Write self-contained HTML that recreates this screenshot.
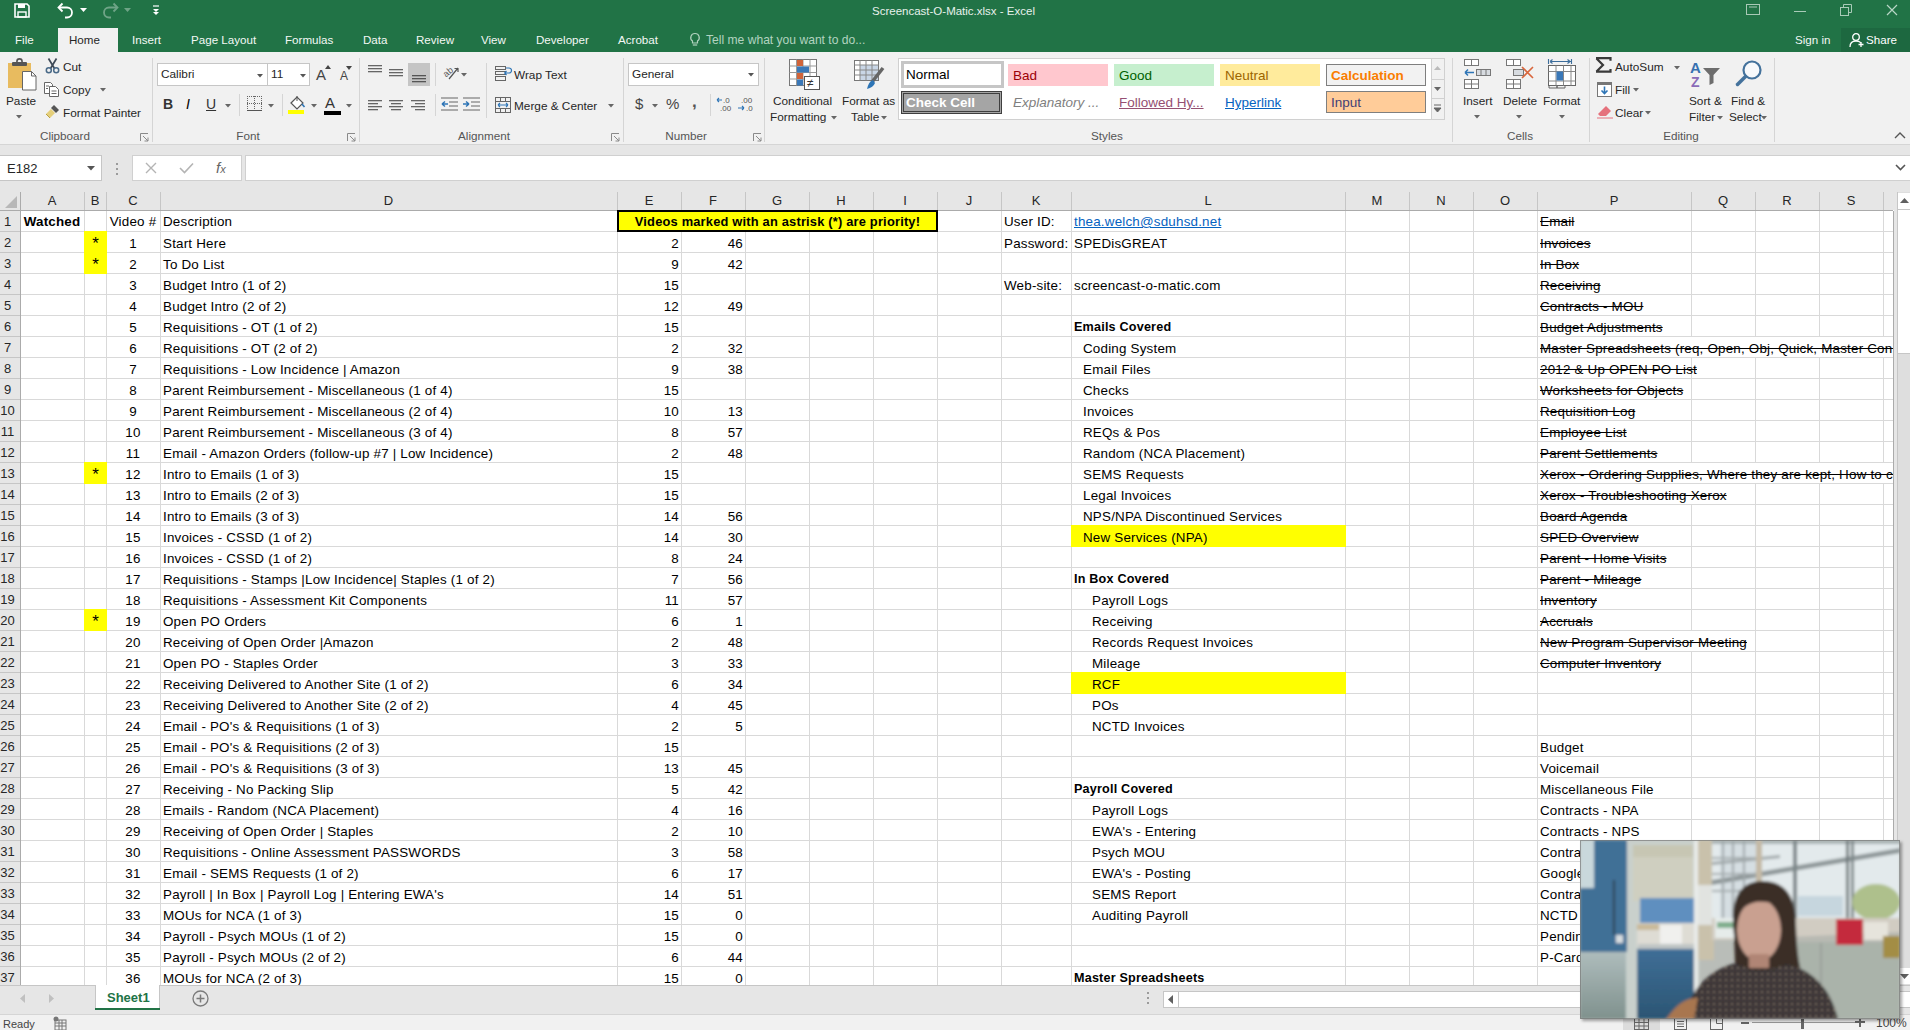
<!DOCTYPE html><html><head><meta charset="utf-8"><style>
html,body{margin:0;padding:0;width:1910px;height:1030px;overflow:hidden;background:#fff;font-family:"Liberation Sans", sans-serif;}
.t{position:absolute;white-space:nowrap;line-height:1;}
.c{position:absolute;white-space:nowrap;font-size:13.4px;letter-spacing:0.2px;line-height:21px;height:21px;color:#000;padding-top:1px}
.r{text-align:right}
.ce{text-align:center}
.rib{color:#262626;font-size:13px}
svg{position:absolute;overflow:visible}

</style></head><body>
<div style="position:absolute;left:0px;top:0px;width:1910px;height:52px;background:#217346"></div>
<div class="t" style="left:872px;top:6px;font-size:11.5px;color:#e8f1ec;">Screencast-O-Matic.xlsx - Excel</div>
<div style="position:absolute;left:58px;top:28px;width:60px;height:25px;background:#f1f1f1"></div>
<div class="t" style="left:15px;top:34px;font-size:11.6px;color:#f3f8f5;">File</div>
<div class="t" style="left:69px;top:34px;font-size:11.6px;color:#262626;">Home</div>
<div class="t" style="left:132px;top:34px;font-size:11.6px;color:#f3f8f5;">Insert</div>
<div class="t" style="left:191px;top:34px;font-size:11.6px;color:#f3f8f5;">Page Layout</div>
<div class="t" style="left:285px;top:34px;font-size:11.6px;color:#f3f8f5;">Formulas</div>
<div class="t" style="left:363px;top:34px;font-size:11.6px;color:#f3f8f5;">Data</div>
<div class="t" style="left:416px;top:34px;font-size:11.6px;color:#f3f8f5;">Review</div>
<div class="t" style="left:481px;top:34px;font-size:11.6px;color:#f3f8f5;">View</div>
<div class="t" style="left:536px;top:34px;font-size:11.6px;color:#f3f8f5;">Developer</div>
<div class="t" style="left:618px;top:34px;font-size:11.6px;color:#f3f8f5;">Acrobat</div>
<div class="t" style="left:706px;top:34px;font-size:12.1px;color:#b3d3c0;">Tell me what you want to do...</div>
<svg style="left:689px;top:32px" width="12" height="16"><path d="M6 1.5a4.2 4.2 0 0 0-2.5 7.6V11h5V9.1A4.2 4.2 0 0 0 6 1.5z" fill="none" stroke="#b3d3c0" stroke-width="1.2"/><path d="M3.8 13h4.4" stroke="#b3d3c0" stroke-width="1.2"/></svg>
<div class="t" style="left:1795px;top:34px;font-size:11.6px;color:#f3f8f5;">Sign in</div>
<div style="position:absolute;left:1841px;top:28px;width:69px;height:24px;background:#1d6840"></div>
<svg style="left:1849px;top:32px" width="16" height="16"><circle cx="7" cy="5" r="3.3" fill="none" stroke="#fff" stroke-width="1.3"/><path d="M1 15c0-4 2.5-6 6-6s4 1 5 2" fill="none" stroke="#fff" stroke-width="1.3"/><path d="M12 10v5M9.5 12.5h5" stroke="#fff" stroke-width="1.3"/></svg>
<div class="t" style="left:1866px;top:34px;font-size:11.6px;color:#fff;">Share</div>
<svg style="left:14px;top:3px" width="16" height="15"><path d="M1 1h12l2 2v11H1z" fill="none" stroke="#fff" stroke-width="1.6"/><rect x="4" y="1" width="7" height="4" fill="#fff"/><rect x="4" y="9" width="8" height="5" fill="none" stroke="#fff" stroke-width="1.4"/></svg>
<svg style="left:57px;top:2px" width="18" height="16"><path d="M2 5.5h8a5 5 0 0 1 0 10H8" fill="none" stroke="#fff" stroke-width="1.8"/><path d="M5.5 1.5L1.5 5.5 5.5 9.5" fill="none" stroke="#fff" stroke-width="1.8"/></svg>
<svg style="left:80px;top:8px" width="7" height="4"><path d="M0 0h7L3.5 4z" fill="#fff"/></svg>
<svg style="left:101px;top:2px" width="18" height="16" opacity="0.35"><path d="M16 5.5H8a5 5 0 0 0 0 10h2" fill="none" stroke="#fff" stroke-width="1.8"/><path d="M12.5 1.5l4 4-4 4" fill="none" stroke="#fff" stroke-width="1.8"/></svg>
<svg style="left:124px;top:8px" width="7" height="4" opacity="0.35"><path d="M0 0h7L3.5 4z" fill="#fff"/></svg>
<svg style="left:152px;top:5px" width="8" height="10"><path d="M1 1h6" stroke="#fff" stroke-width="1.2"/><path d="M1 4h6L4 7z" fill="#fff"/><path d="M1 7h6L4 10z" fill="#fff"/></svg>
<svg style="left:1746px;top:4px" width="14" height="11"><rect x="0.5" y="0.5" width="13" height="10" fill="none" stroke="#a9c9b6" stroke-width="1"/><path d="M3 3h8" stroke="#a9c9b6"/></svg>
<div style="position:absolute;left:1794px;top:11px;width:12px;height:1px;background:#a9cbb8"></div>
<svg style="left:1840px;top:4px" width="12" height="12"><rect x="0.5" y="3.5" width="8" height="8" fill="none" stroke="#a9cbb8"/><path d="M3.5 3.5v-3h8v8h-3" fill="none" stroke="#a9cbb8"/></svg>
<svg style="left:1886px;top:4px" width="12" height="12"><path d="M1 1l10 10M11 1L1 11" stroke="#b9d6c6" stroke-width="1.2"/></svg>
<div style="position:absolute;left:0px;top:52px;width:1910px;height:93px;background:#f1f1f1"></div>
<div style="position:absolute;left:0px;top:144px;width:1910px;height:1px;background:#d5d5d5"></div>
<svg style="left:7px;top:58px" width="31" height="33">
<rect x="1" y="5" width="23" height="25" fill="#e8bb5f"/>
<rect x="5" y="4" width="15" height="4" rx="1" fill="#555"/>
<circle cx="12.5" cy="3.5" r="2.6" fill="none" stroke="#555" stroke-width="1.6"/>
<path d="M15.5 13.5h9l4.5 4.5v14h-13.5z" fill="#fff" stroke="#666" stroke-width="1"/>
<path d="M24.5 13.5v4.5h4.5" fill="none" stroke="#666"/>
</svg>
<div class="t" style="left:6px;top:96px;font-size:11.8px;color:#262626;">Paste</div>
<svg style="left:16px;top:115px" width="6" height="4"><path d="M0 0h6L3 3.5z" fill="#666"/></svg>
<svg style="left:45px;top:58px" width="15" height="16">
<path d="M3.5 0.5l6 10M11.5 0.5l-6 10" stroke="#3e4a57" stroke-width="1.7"/>
<circle cx="3.8" cy="12.3" r="2.5" fill="none" stroke="#4a6a88" stroke-width="1.5"/>
<circle cx="11.2" cy="12.3" r="2.5" fill="none" stroke="#4a6a88" stroke-width="1.5"/>
</svg>
<div class="t" style="left:63px;top:62px;font-size:11.8px;color:#262626;">Cut</div>
<svg style="left:44px;top:82px" width="16" height="15">
<path d="M0.5 0.5h6l2 2v9h-8z" fill="#fff" stroke="#666"/>
<path d="M5.5 4.5h6l3 3v7h-9z" fill="#fff" stroke="#666"/>
<path d="M2 4h3M2 6.5h2M7.5 9h5M7.5 11.5h5" stroke="#666"/>
</svg>
<div class="t" style="left:63px;top:85px;font-size:11.8px;color:#262626;">Copy</div>
<svg style="left:100px;top:88px" width="6" height="4"><path d="M0 0h6L3 3.5z" fill="#666"/></svg>
<svg style="left:45px;top:104px" width="15" height="15">
<path d="M9 1l5 5-3 3-5-5z" fill="#555"/>
<path d="M6 5l4 4-5 5-4-4z" fill="#e5cf7a"/>
<path d="M1 10l4 4" stroke="#b9a040" stroke-width="1"/>
</svg>
<div class="t" style="left:63px;top:108px;font-size:11.8px;color:#262626;">Format Painter</div>
<div class="t" style="left:5px;width:120px;text-align:center;top:130px;font-size:11.7px;color:#555">Clipboard</div>
<svg style="left:140px;top:133px" width="9" height="9"><path d="M0.5 8V0.5H8" fill="none" stroke="#8a8a8a"/><path d="M3 3l5 5M8 4.5V8H4.5" fill="none" stroke="#8a8a8a"/></svg>
<div style="position:absolute;left:152px;top:58px;width:1px;height:84px;background:#d5d5d5"></div>
<div style="position:absolute;left:157px;top:63px;width:111px;height:23px;background:#fff;box-sizing:border-box;border:1px solid #c6c6c6"></div>
<div class="t" style="left:161px;top:69px;font-size:11.8px;color:#262626;">Calibri</div>
<svg style="left:257px;top:74px" width="6" height="4"><path d="M0 0h6L3 3.5z" fill="#555"/></svg>
<div style="position:absolute;left:267px;top:63px;width:43px;height:23px;background:#fff;box-sizing:border-box;border:1px solid #c6c6c6"></div>
<div class="t" style="left:271px;top:69px;font-size:11.8px;color:#262626;">11</div>
<svg style="left:300px;top:74px" width="6" height="4"><path d="M0 0h6L3 3.5z" fill="#555"/></svg>
<div class="t" style="left:316px;top:67px;font-size:15px;color:#444">A</div>
<svg style="left:325px;top:65px" width="6" height="4"><path d="M0 4L3 0 6 4z" fill="#444"/></svg>
<div class="t" style="left:340px;top:70px;font-size:12px;color:#444">A</div>
<svg style="left:346px;top:66px" width="6" height="4"><path d="M0 0h6L3 4z" fill="#444"/></svg>
<div class="t" style="left:163px;top:97px;font-size:14px;font-weight:bold;color:#333">B</div>
<div class="t" style="left:186px;top:97px;font-size:14px;font-style:italic;font-family:"Liberation Serif",serif;font-weight:bold;color:#333">I</div>
<div class="t" style="left:206px;top:97px;font-size:14px;text-decoration:underline;color:#333">U</div>
<svg style="left:225px;top:104px" width="6" height="4"><path d="M0 0h6L3 3.5z" fill="#666"/></svg>
<div style="position:absolute;left:239px;top:94px;width:1px;height:22px;background:#d5d5d5"></div>
<svg style="left:247px;top:96px" width="15" height="15">
<rect x="0" y="0" width="1" height="1" fill="#666"/><rect x="0" y="0" width="1" height="1" fill="#666"/><rect x="0" y="7" width="1" height="1" fill="#666"/><rect x="7" y="0" width="1" height="1" fill="#666"/><rect x="14" y="0" width="1" height="1" fill="#666"/><rect x="2" y="0" width="1" height="1" fill="#666"/><rect x="0" y="2" width="1" height="1" fill="#666"/><rect x="2" y="7" width="1" height="1" fill="#666"/><rect x="7" y="2" width="1" height="1" fill="#666"/><rect x="14" y="2" width="1" height="1" fill="#666"/><rect x="4" y="0" width="1" height="1" fill="#666"/><rect x="0" y="4" width="1" height="1" fill="#666"/><rect x="4" y="7" width="1" height="1" fill="#666"/><rect x="7" y="4" width="1" height="1" fill="#666"/><rect x="14" y="4" width="1" height="1" fill="#666"/><rect x="6" y="0" width="1" height="1" fill="#666"/><rect x="0" y="6" width="1" height="1" fill="#666"/><rect x="6" y="7" width="1" height="1" fill="#666"/><rect x="7" y="6" width="1" height="1" fill="#666"/><rect x="14" y="6" width="1" height="1" fill="#666"/><rect x="8" y="0" width="1" height="1" fill="#666"/><rect x="0" y="8" width="1" height="1" fill="#666"/><rect x="8" y="7" width="1" height="1" fill="#666"/><rect x="7" y="8" width="1" height="1" fill="#666"/><rect x="14" y="8" width="1" height="1" fill="#666"/><rect x="10" y="0" width="1" height="1" fill="#666"/><rect x="0" y="10" width="1" height="1" fill="#666"/><rect x="10" y="7" width="1" height="1" fill="#666"/><rect x="7" y="10" width="1" height="1" fill="#666"/><rect x="14" y="10" width="1" height="1" fill="#666"/><rect x="12" y="0" width="1" height="1" fill="#666"/><rect x="0" y="12" width="1" height="1" fill="#666"/><rect x="12" y="7" width="1" height="1" fill="#666"/><rect x="7" y="12" width="1" height="1" fill="#666"/><rect x="14" y="12" width="1" height="1" fill="#666"/><rect x="14" y="0" width="1" height="1" fill="#666"/><rect x="0" y="14" width="1" height="1" fill="#666"/><rect x="14" y="7" width="1" height="1" fill="#666"/><rect x="7" y="14" width="1" height="1" fill="#666"/><rect x="14" y="14" width="1" height="1" fill="#666"/><rect x="0" y="14" width="15" height="1" fill="#555"/>
</svg>
<svg style="left:268px;top:104px" width="6" height="4"><path d="M0 0h6L3 3.5z" fill="#666"/></svg>
<div style="position:absolute;left:282px;top:94px;width:1px;height:22px;background:#d5d5d5"></div>
<svg style="left:288px;top:95px" width="20" height="20">
<path d="M3 8l6-6 6 6-6 6z" fill="#fff" stroke="#555" stroke-width="1.2"/>
<path d="M9 1V6" stroke="#555"/>
<path d="M14 9l2.5 3" stroke="#2e75b6" stroke-width="1.6"/>
<rect x="0" y="15" width="16" height="4" fill="#ffff00"/>
</svg>
<svg style="left:311px;top:104px" width="6" height="4"><path d="M0 0h6L3 3.5z" fill="#666"/></svg>
<div class="t" style="left:325px;top:95px;font-size:15px;color:#333">A</div>
<div style="position:absolute;left:324px;top:111px;width:17px;height:4px;background:#000"></div>
<svg style="left:346px;top:104px" width="6" height="4"><path d="M0 0h6L3 3.5z" fill="#666"/></svg>
<div class="t" style="left:188px;width:120px;text-align:center;top:130px;font-size:11.7px;color:#555">Font</div>
<svg style="left:347px;top:133px" width="9" height="9"><path d="M0.5 8V0.5H8" fill="none" stroke="#8a8a8a"/><path d="M3 3l5 5M8 4.5V8H4.5" fill="none" stroke="#8a8a8a"/></svg>
<div style="position:absolute;left:359px;top:58px;width:1px;height:84px;background:#d5d5d5"></div>
<svg style="left:368px;top:65px" width="16" height="14"><rect x="0" y="0" width="14" height="1.3" fill="#666"/><rect x="0" y="3" width="14" height="1.3" fill="#666"/><rect x="0" y="6" width="14" height="1.3" fill="#666"/></svg>
<svg style="left:389px;top:69px" width="16" height="14"><rect x="0" y="0" width="14" height="1.3" fill="#666"/><rect x="0" y="3" width="14" height="1.3" fill="#666"/><rect x="0" y="6" width="14" height="1.3" fill="#666"/></svg>
<div style="position:absolute;left:408px;top:63px;width:22px;height:23px;background:#c5c5c5"></div>
<svg style="left:412px;top:75px" width="16" height="14"><rect x="0" y="0" width="14" height="1.3" fill="#555"/><rect x="0" y="3" width="14" height="1.3" fill="#555"/><rect x="0" y="6" width="14" height="1.3" fill="#555"/></svg>
<div style="position:absolute;left:435px;top:63px;width:1px;height:23px;background:#d5d5d5"></div>
<svg style="left:442px;top:64px" width="18" height="17">
<text x="1" y="11" font-size="9" fill="#555" font-family="Liberation Sans" transform="rotate(-40 6 8)">ab</text>
<path d="M7 15L16 4M12.5 4.5H16V8" fill="none" stroke="#555" stroke-width="1.2"/>
</svg>
<svg style="left:461px;top:73px" width="6" height="4"><path d="M0 0h6L3 3.5z" fill="#666"/></svg>
<svg style="left:368px;top:100px" width="16" height="14"><rect x="0" y="0" width="14" height="1.3" fill="#666"/><rect x="0" y="3" width="10" height="1.3" fill="#666"/><rect x="0" y="6" width="14" height="1.3" fill="#666"/><rect x="0" y="9" width="10" height="1.3" fill="#666"/></svg>
<svg style="left:389px;top:100px" width="16" height="14"><rect x="0" y="0" width="14" height="1.3" fill="#666"/><rect x="2" y="3" width="10" height="1.3" fill="#666"/><rect x="0" y="6" width="14" height="1.3" fill="#666"/><rect x="2" y="9" width="10" height="1.3" fill="#666"/></svg>
<svg style="left:411px;top:100px" width="16" height="14"><rect x="0" y="0" width="14" height="1.3" fill="#666"/><rect x="4" y="3" width="10" height="1.3" fill="#666"/><rect x="0" y="6" width="14" height="1.3" fill="#666"/><rect x="4" y="9" width="10" height="1.3" fill="#666"/></svg>
<div style="position:absolute;left:435px;top:94px;width:1px;height:22px;background:#d5d5d5"></div>
<svg style="left:441px;top:97px" width="18" height="14">
<path d="M0 1h17M8 5h9M8 9h9M0 13h17" stroke="#666" stroke-width="1.2"/>
<path d="M1 7h6M1 7l3-2.5M1 7l3 2.5" stroke="#2e75b6" stroke-width="1.5"/>
</svg>
<svg style="left:463px;top:97px" width="18" height="14">
<path d="M0 1h17M8 5h9M8 9h9M0 13h17" stroke="#666" stroke-width="1.2"/>
<path d="M0 7h6M6 7l-3-2.5M6 7l-3 2.5" stroke="#2e75b6" stroke-width="1.5"/>
</svg>
<div style="position:absolute;left:486px;top:63px;width:1px;height:55px;background:#d5d5d5"></div>
<svg style="left:495px;top:66px" width="17" height="16">
<rect x="0.5" y="0.5" width="10" height="3" fill="none" stroke="#666"/>
<rect x="0.5" y="5.5" width="10" height="3" fill="none" stroke="#666"/>
<rect x="0.5" y="10.5" width="10" height="4" fill="none" stroke="#666"/>
<path d="M11 2h3a2.5 2.5 0 0 1 0 5h-4M11.5 5l-1.8 2 1.8 2" fill="none" stroke="#2e75b6" stroke-width="1.2"/>
</svg>
<div class="t" style="left:514px;top:70px;font-size:11.8px;color:#262626;">Wrap Text</div>
<svg style="left:495px;top:97px" width="16" height="16">
<rect x="0.5" y="0.5" width="15" height="15" fill="none" stroke="#666"/>
<path d="M0.5 4.5h15M0.5 11.5h15M5.5 0.5v4M10.5 0.5v4M5.5 11.5v4M10.5 11.5v4" stroke="#666"/>
<path d="M3 8h10M3 8l2-2M3 8l2 2M13 8l-2-2M13 8l-2 2" stroke="#2e75b6" stroke-width="1.1"/>
</svg>
<div class="t" style="left:514px;top:101px;font-size:11.8px;color:#262626;">Merge &amp; Center</div>
<svg style="left:608px;top:104px" width="6" height="4"><path d="M0 0h6L3 3.5z" fill="#666"/></svg>
<div class="t" style="left:424px;width:120px;text-align:center;top:130px;font-size:11.7px;color:#555">Alignment</div>
<svg style="left:611px;top:133px" width="9" height="9"><path d="M0.5 8V0.5H8" fill="none" stroke="#8a8a8a"/><path d="M3 3l5 5M8 4.5V8H4.5" fill="none" stroke="#8a8a8a"/></svg>
<div style="position:absolute;left:623px;top:58px;width:1px;height:84px;background:#d5d5d5"></div>
<div style="position:absolute;left:628px;top:63px;width:131px;height:23px;background:#fff;box-sizing:border-box;border:1px solid #c6c6c6"></div>
<div class="t" style="left:632px;top:69px;font-size:11.8px;color:#262626;">General</div>
<svg style="left:748px;top:73px" width="6" height="4"><path d="M0 0h6L3 3.5z" fill="#555"/></svg>
<div class="t" style="left:635px;top:96px;font-size:15px;color:#444">$</div>
<svg style="left:652px;top:104px" width="6" height="4"><path d="M0 0h6L3 3.5z" fill="#666"/></svg>
<div class="t" style="left:666px;top:96px;font-size:15px;color:#444">%</div>
<div class="t" style="left:692px;top:93px;font-size:17px;font-weight:bold;color:#555">,</div>
<div style="position:absolute;left:710px;top:94px;width:1px;height:22px;background:#d5d5d5"></div>
<svg style="left:717px;top:96px" width="17" height="16">
<text x="6" y="7" font-size="8" fill="#555" font-family="Liberation Sans">.0</text>
<text x="3" y="15" font-size="8" fill="#555" font-family="Liberation Sans">.00</text>
<path d="M0 4h5M0 4l2-2M0 4l2 2" stroke="#2e75b6" stroke-width="1.1"/>
</svg>
<svg style="left:738px;top:96px" width="17" height="16">
<text x="3" y="7" font-size="8" fill="#555" font-family="Liberation Sans">.00</text>
<text x="8" y="15" font-size="8" fill="#555" font-family="Liberation Sans">.0</text>
<path d="M0 12h6M6 12l-2-2M6 12l-2 2" stroke="#2e75b6" stroke-width="1.1"/>
</svg>
<div class="t" style="left:626px;width:120px;text-align:center;top:130px;font-size:11.7px;color:#555">Number</div>
<svg style="left:753px;top:133px" width="9" height="9"><path d="M0.5 8V0.5H8" fill="none" stroke="#8a8a8a"/><path d="M3 3l5 5M8 4.5V8H4.5" fill="none" stroke="#8a8a8a"/></svg>
<div style="position:absolute;left:764px;top:58px;width:1px;height:84px;background:#d5d5d5"></div>
<svg style="left:789px;top:59px" width="32" height="32">
<rect x="0.5" y="0.5" width="27" height="26" fill="#fff" stroke="#777"/>
<path d="M0.5 7h27M0.5 13.5h27M0.5 20h27M7.5 0.5v26M14 0.5v26M21 0.5v26" stroke="#999"/>
<rect x="8" y="1" width="6" height="6" fill="#d0643a"/>
<rect x="8" y="7.5" width="12" height="6" fill="#3a78b8"/>
<rect x="8" y="14" width="6" height="6" fill="#d0643a"/>
<rect x="8" y="20.5" width="6" height="6" fill="#3a78b8"/>
<rect x="15.5" y="17.5" width="15" height="13" fill="#fff" stroke="#555"/>
<text x="18" y="28" font-size="12" fill="#333" font-family="Liberation Sans">≠</text>
</svg>
<div class="t" style="left:773px;top:96px;font-size:11.8px;color:#262626;">Conditional</div>
<div class="t" style="left:770px;top:112px;font-size:11.8px;color:#262626;">Formatting</div>
<svg style="left:831px;top:116px" width="6" height="4"><path d="M0 0h6L3 3.5z" fill="#666"/></svg>
<svg style="left:854px;top:60px" width="31" height="31">
<rect x="0.5" y="0.5" width="24" height="20" fill="#fff" stroke="#777"/>
<rect x="6" y="5" width="18" height="15" fill="#c9d6e6"/>
<path d="M0.5 5h24M0.5 10h24M0.5 15h24M6 0.5v20M12 0.5v20M18 0.5v20" stroke="#888"/>
<path d="M29 8L18 22" stroke="#666" stroke-width="3.5"/>
<path d="M19 20c-3 1-5 4-6 9 4-1 7-3 8-6z" fill="#2e75b6"/>
</svg>
<div class="t" style="left:842px;top:96px;font-size:11.8px;color:#262626;">Format as</div>
<div class="t" style="left:851px;top:112px;font-size:11.8px;color:#262626;">Table</div>
<svg style="left:881px;top:116px" width="6" height="4"><path d="M0 0h6L3 3.5z" fill="#666"/></svg>
<div style="position:absolute;left:898px;top:58px;width:547px;height:62px;background:#fff;box-sizing:border-box;border:1px solid #d0d0d0"></div>
<div style="position:absolute;left:901px;top:61px;width:103px;height:27px;background:#fff;box-sizing:border-box;border:3px solid #c6c6c6"></div>
<div class="t" style="left:906px;top:66px;font-size:13.5px;color:#000;padding-top:2px">Normal</div>
<div style="position:absolute;left:1008px;top:64px;width:100px;height:22px;background:#ffc7ce;box-sizing:border-box;"></div>
<div class="t" style="left:1013px;top:69px;font-size:13.5px;color:#9c0006;">Bad</div>
<div style="position:absolute;left:1114px;top:64px;width:100px;height:22px;background:#c6efce;box-sizing:border-box;"></div>
<div class="t" style="left:1119px;top:69px;font-size:13.5px;color:#006100;">Good</div>
<div style="position:absolute;left:1220px;top:64px;width:100px;height:22px;background:#ffeb9c;box-sizing:border-box;"></div>
<div class="t" style="left:1225px;top:69px;font-size:13.5px;color:#9c6500;">Neutral</div>
<div style="position:absolute;left:1326px;top:64px;width:100px;height:22px;background:#f2f2f2;box-sizing:border-box;border:1px solid #7f7f7f"></div>
<div class="t" style="left:1331px;top:69px;font-size:13.5px;color:#fa7d00;font-weight:bold">Calculation</div>
<div style="position:absolute;left:901px;top:91px;width:101px;height:23px;background:#a5a5a5;box-sizing:border-box;border:3px double #3f3f3f"></div>
<div class="t" style="left:906px;top:96px;font-size:13.5px;color:#fff;font-weight:bold">Check Cell</div>
<div style="position:absolute;left:1008px;top:91px;width:100px;height:22px;background:#fff;box-sizing:border-box;"></div>
<div class="t" style="left:1013px;top:96px;font-size:13.5px;color:#7f7f7f;font-style:italic">Explanatory ...</div>
<div style="position:absolute;left:1114px;top:91px;width:100px;height:22px;background:#fff;box-sizing:border-box;"></div>
<div class="t" style="left:1119px;top:96px;font-size:13.5px;color:#954f72;text-decoration:underline">Followed Hy...</div>
<div style="position:absolute;left:1220px;top:91px;width:100px;height:22px;background:#fff;box-sizing:border-box;"></div>
<div class="t" style="left:1225px;top:96px;font-size:13.5px;color:#0563c1;text-decoration:underline">Hyperlink</div>
<div style="position:absolute;left:1326px;top:91px;width:100px;height:22px;background:#ffcc99;box-sizing:border-box;border:1px solid #7f7f7f"></div>
<div class="t" style="left:1331px;top:96px;font-size:13.5px;color:#3f3f76;">Input</div>
<div style="position:absolute;left:1431px;top:58px;width:14px;height:62px;background:#f1f1f1;box-sizing:border-box;border:1px solid #d0d0d0"></div>
<div style="position:absolute;left:1432px;top:79px;width:12px;height:1px;background:#d0d0d0"></div>
<div style="position:absolute;left:1432px;top:98px;width:12px;height:1px;background:#d0d0d0"></div>
<svg style="left:1434px;top:66px" width="7" height="4"><path d="M0 4L3.5 0 7 4z" fill="#bbb"/></svg>
<svg style="left:1434px;top:87px" width="7" height="4"><path d="M0 0h7L3.5 4z" fill="#666"/></svg>
<svg style="left:1434px;top:104px" width="7" height="8"><path d="M0 1h7M0 4h7L3.5 8z" stroke="#666" fill="#666"/></svg>
<div class="t" style="left:1047px;width:120px;text-align:center;top:130px;font-size:11.7px;color:#555">Styles</div>
<div style="position:absolute;left:1452px;top:58px;width:1px;height:84px;background:#d5d5d5"></div>
<svg style="left:1464px;top:59px" width="32" height="30"><rect x="0.5" y="0.5" width="14" height="6" fill="#fff" stroke="#777"/><path d="M7.5 0.5v6" stroke="#777"/><rect x="12.5" y="10.5" width="14" height="6" fill="#d7dbe0" stroke="#777"/><path d="M17 10.5v6M22 10.5v6" stroke="#777"/><path d="M1 13.5h9M1 13.5l3-3M1 13.5l3 3" stroke="#2e75b6" stroke-width="1.5"/><rect x="0.5" y="20.5" width="14" height="9" fill="#fff" stroke="#777"/><path d="M7.5 20.5v9M0.5 25h14" stroke="#777"/></svg>
<div class="t" style="left:1463px;top:96px;font-size:11.8px;color:#262626;">Insert</div>
<svg style="left:1474px;top:115px" width="6" height="4"><path d="M0 0h6L3 3.5z" fill="#666"/></svg>
<svg style="left:1506px;top:59px" width="32" height="30"><rect x="0.5" y="0.5" width="14" height="6" fill="#fff" stroke="#777"/><path d="M7.5 0.5v6" stroke="#777"/><rect x="7.5" y="10.5" width="10" height="6" fill="#d7dbe0" stroke="#777"/><rect x="0.5" y="20.5" width="14" height="9" fill="#fff" stroke="#777"/><path d="M7.5 20.5v9M0.5 25h14" stroke="#777"/><path d="M16 8l11 11M27 8L16 19" stroke="#d9663c" stroke-width="1.6"/></svg>
<div class="t" style="left:1503px;top:96px;font-size:11.8px;color:#262626;">Delete</div>
<svg style="left:1516px;top:115px" width="6" height="4"><path d="M0 0h6L3 3.5z" fill="#666"/></svg>
<svg style="left:1548px;top:59px" width="32" height="30"><path d="M2 2.5h21M0.5 0v5M23.5 0v5M2 2.5l2.5-2M2 2.5l2.5 2M22 2.5l-2.5-2M22 2.5l-2.5 2" fill="none" stroke="#3d6e9c" stroke-width="1.1"/><rect x="0.5" y="6.5" width="27" height="20" fill="#fff" stroke="#666"/><path d="M0.5 12.5h27M0.5 22h27M8 6.5v20M15.5 6.5v20M23 6.5v20" stroke="#888"/><rect x="8.5" y="12.5" width="6.5" height="9" fill="#3a78b8"/><path d="M1 27v2h8v-2M9 27v2h8v-2" fill="none" stroke="#666"/></svg>
<div class="t" style="left:1543px;top:96px;font-size:11.8px;color:#262626;">Format</div>
<svg style="left:1559px;top:115px" width="6" height="4"><path d="M0 0h6L3 3.5z" fill="#666"/></svg>
<div class="t" style="left:1460px;width:120px;text-align:center;top:130px;font-size:11.7px;color:#555">Cells</div>
<div style="position:absolute;left:1589px;top:58px;width:1px;height:84px;background:#d5d5d5"></div>
<svg style="left:1595px;top:57px" width="17" height="16"><path d="M1 1.2h14.5v2.6M1.5 1.5l6.5 6.5-6.5 6.5M1 14.6h14.5v-2.6" fill="none" stroke="#3a3a3a" stroke-width="2.2" stroke-linejoin="miter"/></svg>
<div class="t" style="left:1615px;top:62px;font-size:11.8px;color:#262626;">AutoSum</div>
<svg style="left:1674px;top:66px" width="6" height="4"><path d="M0 0h6L3 3.5z" fill="#666"/></svg>
<svg style="left:1597px;top:82px" width="15" height="15"><rect x="0.5" y="0.5" width="14" height="14" fill="#fff" stroke="#777"/><rect x="0.5" y="0.5" width="14" height="2.5" fill="#777"/><path d="M7.5 4.5v7M4.5 8.5l3 3 3-3" fill="none" stroke="#2e75b6" stroke-width="1.6"/></svg>
<div class="t" style="left:1615px;top:85px;font-size:11.8px;color:#262626;">Fill</div>
<svg style="left:1633px;top:88px" width="6" height="4"><path d="M0 0h6L3 3.5z" fill="#666"/></svg>
<svg style="left:1597px;top:104px" width="16" height="15"><path d="M1 10l8-8 5 5-5 5H3z" fill="#e5717c"/><path d="M0 14h16" stroke="#e5717c"/></svg>
<div class="t" style="left:1615px;top:108px;font-size:11.8px;color:#262626;">Clear</div>
<svg style="left:1645px;top:111px" width="6" height="4"><path d="M0 0h6L3 3.5z" fill="#666"/></svg>
<svg style="left:1690px;top:60px" width="32" height="29">
<text x="0" y="12.5" font-size="15" font-weight="bold" fill="#3670b0" font-family="Liberation Sans">A</text>
<text x="1" y="27" font-size="14" font-weight="bold" fill="#8a6bb8" font-family="Liberation Sans">Z</text>
<path d="M13 8h17l-6.5 7v8l-4 2v-10z" fill="#6d6d6d"/>
</svg>
<div class="t" style="left:1689px;top:96px;font-size:11.8px;color:#262626;">Sort &amp;</div>
<div class="t" style="left:1689px;top:112px;font-size:11.8px;color:#262626;">Filter</div>
<svg style="left:1717px;top:116px" width="6" height="4"><path d="M0 0h6L3 3.5z" fill="#666"/></svg>
<svg style="left:1735px;top:59px" width="29" height="29">
<circle cx="17" cy="11" r="8.5" fill="#f7f9fb" stroke="#44729c" stroke-width="2.2"/>
<path d="M10.5 17.5L2.5 25.5" stroke="#44729c" stroke-width="3.5" stroke-linecap="round"/>
</svg>
<div class="t" style="left:1731px;top:96px;font-size:11.8px;color:#262626;">Find &amp;</div>
<div class="t" style="left:1729px;top:112px;font-size:11.8px;color:#262626;">Select</div>
<svg style="left:1761px;top:116px" width="6" height="4"><path d="M0 0h6L3 3.5z" fill="#666"/></svg>
<div class="t" style="left:1621px;width:120px;text-align:center;top:130px;font-size:11.7px;color:#555">Editing</div>
<div style="position:absolute;left:1774px;top:58px;width:1px;height:84px;background:#d5d5d5"></div>
<svg style="left:1894px;top:132px" width="12" height="7"><path d="M1 6l5-5 5 5" fill="none" stroke="#555" stroke-width="1.4"/></svg>
<div style="position:absolute;left:0px;top:145px;width:1910px;height:47px;background:#e6e6e6"></div>
<div style="position:absolute;left:0px;top:155px;width:102px;height:26px;background:#fff;box-sizing:border-box;border:1px solid #c6c6c6;border-left:none"></div>
<div class="t" style="left:7px;top:162px;font-size:13px;color:#262626">E182</div>
<svg style="left:87px;top:166px" width="8" height="5"><path d="M0 0h8L4 4.5z" fill="#555"/></svg>
<div style="position:absolute;left:116px;top:163px;width:2px;height:2px;background:#9b9b9b"></div>
<div style="position:absolute;left:116px;top:168px;width:2px;height:2px;background:#9b9b9b"></div>
<div style="position:absolute;left:116px;top:173px;width:2px;height:2px;background:#9b9b9b"></div>
<div style="position:absolute;left:132px;top:155px;width:110px;height:26px;background:#fff;box-sizing:border-box;border:1px solid #d0d0d0"></div>
<svg style="left:145px;top:162px" width="12" height="12"><path d="M1 1l10 10M11 1L1 11" stroke="#b4b4b4" stroke-width="1.4"/></svg>
<svg style="left:179px;top:162px" width="15" height="12"><path d="M1 6l4.5 4.5L14 1.5" fill="none" stroke="#b4b4b4" stroke-width="1.6"/></svg>
<div class="t" style="left:216px;top:160px;font-size:15px;color:#666;font-family:"Liberation Serif",serif;font-weight:bold"><i>f</i><span style="font-size:11px"><i>x</i></span></div>
<div style="position:absolute;left:245px;top:155px;width:1665px;height:26px;background:#fff;box-sizing:border-box;border:1px solid #d0d0d0;border-right:none"></div>
<svg style="left:1895px;top:164px" width="11" height="7"><path d="M1 1l4.5 4.5L10 1" fill="none" stroke="#555" stroke-width="1.6"/></svg>
<div style="position:absolute;left:0px;top:192px;width:1897px;height:18px;background:#e6e6e6"></div>
<div style="position:absolute;left:0px;top:211px;width:20px;height:774px;background:#e6e6e6"></div>
<svg style="left:4px;top:195px" width="14" height="14"><path d="M13 1V13H1z" fill="#b8b8b8"/></svg>
<div style="position:absolute;left:20px;top:192px;width:1px;height:18px;background:#c6c6c6"></div>
<div class="t" style="left:20px;top:194px;width:64px;text-align:center;font-size:13px;color:#262626">A</div>
<div style="position:absolute;left:84px;top:192px;width:1px;height:18px;background:#c6c6c6"></div>
<div class="t" style="left:84px;top:194px;width:22px;text-align:center;font-size:13px;color:#262626">B</div>
<div style="position:absolute;left:106px;top:192px;width:1px;height:18px;background:#c6c6c6"></div>
<div class="t" style="left:106px;top:194px;width:54px;text-align:center;font-size:13px;color:#262626">C</div>
<div style="position:absolute;left:160px;top:192px;width:1px;height:18px;background:#c6c6c6"></div>
<div class="t" style="left:160px;top:194px;width:457px;text-align:center;font-size:13px;color:#262626">D</div>
<div style="position:absolute;left:617px;top:192px;width:1px;height:18px;background:#c6c6c6"></div>
<div class="t" style="left:617px;top:194px;width:64px;text-align:center;font-size:13px;color:#262626">E</div>
<div style="position:absolute;left:681px;top:192px;width:1px;height:18px;background:#c6c6c6"></div>
<div class="t" style="left:681px;top:194px;width:64px;text-align:center;font-size:13px;color:#262626">F</div>
<div style="position:absolute;left:745px;top:192px;width:1px;height:18px;background:#c6c6c6"></div>
<div class="t" style="left:745px;top:194px;width:64px;text-align:center;font-size:13px;color:#262626">G</div>
<div style="position:absolute;left:809px;top:192px;width:1px;height:18px;background:#c6c6c6"></div>
<div class="t" style="left:809px;top:194px;width:64px;text-align:center;font-size:13px;color:#262626">H</div>
<div style="position:absolute;left:873px;top:192px;width:1px;height:18px;background:#c6c6c6"></div>
<div class="t" style="left:873px;top:194px;width:64px;text-align:center;font-size:13px;color:#262626">I</div>
<div style="position:absolute;left:937px;top:192px;width:1px;height:18px;background:#c6c6c6"></div>
<div class="t" style="left:937px;top:194px;width:64px;text-align:center;font-size:13px;color:#262626">J</div>
<div style="position:absolute;left:1001px;top:192px;width:1px;height:18px;background:#c6c6c6"></div>
<div class="t" style="left:1001px;top:194px;width:70px;text-align:center;font-size:13px;color:#262626">K</div>
<div style="position:absolute;left:1071px;top:192px;width:1px;height:18px;background:#c6c6c6"></div>
<div class="t" style="left:1071px;top:194px;width:274px;text-align:center;font-size:13px;color:#262626">L</div>
<div style="position:absolute;left:1345px;top:192px;width:1px;height:18px;background:#c6c6c6"></div>
<div class="t" style="left:1345px;top:194px;width:64px;text-align:center;font-size:13px;color:#262626">M</div>
<div style="position:absolute;left:1409px;top:192px;width:1px;height:18px;background:#c6c6c6"></div>
<div class="t" style="left:1409px;top:194px;width:64px;text-align:center;font-size:13px;color:#262626">N</div>
<div style="position:absolute;left:1473px;top:192px;width:1px;height:18px;background:#c6c6c6"></div>
<div class="t" style="left:1473px;top:194px;width:64px;text-align:center;font-size:13px;color:#262626">O</div>
<div style="position:absolute;left:1537px;top:192px;width:1px;height:18px;background:#c6c6c6"></div>
<div class="t" style="left:1537px;top:194px;width:154px;text-align:center;font-size:13px;color:#262626">P</div>
<div style="position:absolute;left:1691px;top:192px;width:1px;height:18px;background:#c6c6c6"></div>
<div class="t" style="left:1691px;top:194px;width:64px;text-align:center;font-size:13px;color:#262626">Q</div>
<div style="position:absolute;left:1755px;top:192px;width:1px;height:18px;background:#c6c6c6"></div>
<div class="t" style="left:1755px;top:194px;width:64px;text-align:center;font-size:13px;color:#262626">R</div>
<div style="position:absolute;left:1819px;top:192px;width:1px;height:18px;background:#c6c6c6"></div>
<div class="t" style="left:1819px;top:194px;width:64px;text-align:center;font-size:13px;color:#262626">S</div>
<div style="position:absolute;left:1883px;top:192px;width:1px;height:18px;background:#c6c6c6"></div>
<div style="position:absolute;left:20px;top:192px;width:1px;height:793px;background:#ababab"></div>
<div style="position:absolute;left:0px;top:210px;width:1893px;height:1px;background:#ababab"></div>
<div style="position:absolute;left:21px;top:211px;width:1872px;height:774px;background:#fff"></div>
<div style="position:absolute;left:21px;top:211px;width:1872px;height:774px;background:repeating-linear-gradient(to bottom,transparent 0,transparent 20px,#d9d9d9 20px,#d9d9d9 21px)"></div>
<div style="position:absolute;left:0px;top:231px;width:20px;height:1px;background:#c6c6c6"></div>
<div class="t" style="left:-2px;width:19px;text-align:center;top:215px;font-size:13px;color:#262626">1</div>
<div style="position:absolute;left:0px;top:252px;width:20px;height:1px;background:#c6c6c6"></div>
<div class="t" style="left:-2px;width:19px;text-align:center;top:236px;font-size:13px;color:#262626">2</div>
<div style="position:absolute;left:0px;top:273px;width:20px;height:1px;background:#c6c6c6"></div>
<div class="t" style="left:-2px;width:19px;text-align:center;top:257px;font-size:13px;color:#262626">3</div>
<div style="position:absolute;left:0px;top:294px;width:20px;height:1px;background:#c6c6c6"></div>
<div class="t" style="left:-2px;width:19px;text-align:center;top:278px;font-size:13px;color:#262626">4</div>
<div style="position:absolute;left:0px;top:315px;width:20px;height:1px;background:#c6c6c6"></div>
<div class="t" style="left:-2px;width:19px;text-align:center;top:299px;font-size:13px;color:#262626">5</div>
<div style="position:absolute;left:0px;top:336px;width:20px;height:1px;background:#c6c6c6"></div>
<div class="t" style="left:-2px;width:19px;text-align:center;top:320px;font-size:13px;color:#262626">6</div>
<div style="position:absolute;left:0px;top:357px;width:20px;height:1px;background:#c6c6c6"></div>
<div class="t" style="left:-2px;width:19px;text-align:center;top:341px;font-size:13px;color:#262626">7</div>
<div style="position:absolute;left:0px;top:378px;width:20px;height:1px;background:#c6c6c6"></div>
<div class="t" style="left:-2px;width:19px;text-align:center;top:362px;font-size:13px;color:#262626">8</div>
<div style="position:absolute;left:0px;top:399px;width:20px;height:1px;background:#c6c6c6"></div>
<div class="t" style="left:-2px;width:19px;text-align:center;top:383px;font-size:13px;color:#262626">9</div>
<div style="position:absolute;left:0px;top:420px;width:20px;height:1px;background:#c6c6c6"></div>
<div class="t" style="left:-2px;width:19px;text-align:center;top:404px;font-size:13px;color:#262626">10</div>
<div style="position:absolute;left:0px;top:441px;width:20px;height:1px;background:#c6c6c6"></div>
<div class="t" style="left:-2px;width:19px;text-align:center;top:425px;font-size:13px;color:#262626">11</div>
<div style="position:absolute;left:0px;top:462px;width:20px;height:1px;background:#c6c6c6"></div>
<div class="t" style="left:-2px;width:19px;text-align:center;top:446px;font-size:13px;color:#262626">12</div>
<div style="position:absolute;left:0px;top:483px;width:20px;height:1px;background:#c6c6c6"></div>
<div class="t" style="left:-2px;width:19px;text-align:center;top:467px;font-size:13px;color:#262626">13</div>
<div style="position:absolute;left:0px;top:504px;width:20px;height:1px;background:#c6c6c6"></div>
<div class="t" style="left:-2px;width:19px;text-align:center;top:488px;font-size:13px;color:#262626">14</div>
<div style="position:absolute;left:0px;top:525px;width:20px;height:1px;background:#c6c6c6"></div>
<div class="t" style="left:-2px;width:19px;text-align:center;top:509px;font-size:13px;color:#262626">15</div>
<div style="position:absolute;left:0px;top:546px;width:20px;height:1px;background:#c6c6c6"></div>
<div class="t" style="left:-2px;width:19px;text-align:center;top:530px;font-size:13px;color:#262626">16</div>
<div style="position:absolute;left:0px;top:567px;width:20px;height:1px;background:#c6c6c6"></div>
<div class="t" style="left:-2px;width:19px;text-align:center;top:551px;font-size:13px;color:#262626">17</div>
<div style="position:absolute;left:0px;top:588px;width:20px;height:1px;background:#c6c6c6"></div>
<div class="t" style="left:-2px;width:19px;text-align:center;top:572px;font-size:13px;color:#262626">18</div>
<div style="position:absolute;left:0px;top:609px;width:20px;height:1px;background:#c6c6c6"></div>
<div class="t" style="left:-2px;width:19px;text-align:center;top:593px;font-size:13px;color:#262626">19</div>
<div style="position:absolute;left:0px;top:630px;width:20px;height:1px;background:#c6c6c6"></div>
<div class="t" style="left:-2px;width:19px;text-align:center;top:614px;font-size:13px;color:#262626">20</div>
<div style="position:absolute;left:0px;top:651px;width:20px;height:1px;background:#c6c6c6"></div>
<div class="t" style="left:-2px;width:19px;text-align:center;top:635px;font-size:13px;color:#262626">21</div>
<div style="position:absolute;left:0px;top:672px;width:20px;height:1px;background:#c6c6c6"></div>
<div class="t" style="left:-2px;width:19px;text-align:center;top:656px;font-size:13px;color:#262626">22</div>
<div style="position:absolute;left:0px;top:693px;width:20px;height:1px;background:#c6c6c6"></div>
<div class="t" style="left:-2px;width:19px;text-align:center;top:677px;font-size:13px;color:#262626">23</div>
<div style="position:absolute;left:0px;top:714px;width:20px;height:1px;background:#c6c6c6"></div>
<div class="t" style="left:-2px;width:19px;text-align:center;top:698px;font-size:13px;color:#262626">24</div>
<div style="position:absolute;left:0px;top:735px;width:20px;height:1px;background:#c6c6c6"></div>
<div class="t" style="left:-2px;width:19px;text-align:center;top:719px;font-size:13px;color:#262626">25</div>
<div style="position:absolute;left:0px;top:756px;width:20px;height:1px;background:#c6c6c6"></div>
<div class="t" style="left:-2px;width:19px;text-align:center;top:740px;font-size:13px;color:#262626">26</div>
<div style="position:absolute;left:0px;top:777px;width:20px;height:1px;background:#c6c6c6"></div>
<div class="t" style="left:-2px;width:19px;text-align:center;top:761px;font-size:13px;color:#262626">27</div>
<div style="position:absolute;left:0px;top:798px;width:20px;height:1px;background:#c6c6c6"></div>
<div class="t" style="left:-2px;width:19px;text-align:center;top:782px;font-size:13px;color:#262626">28</div>
<div style="position:absolute;left:0px;top:819px;width:20px;height:1px;background:#c6c6c6"></div>
<div class="t" style="left:-2px;width:19px;text-align:center;top:803px;font-size:13px;color:#262626">29</div>
<div style="position:absolute;left:0px;top:840px;width:20px;height:1px;background:#c6c6c6"></div>
<div class="t" style="left:-2px;width:19px;text-align:center;top:824px;font-size:13px;color:#262626">30</div>
<div style="position:absolute;left:0px;top:861px;width:20px;height:1px;background:#c6c6c6"></div>
<div class="t" style="left:-2px;width:19px;text-align:center;top:845px;font-size:13px;color:#262626">31</div>
<div style="position:absolute;left:0px;top:882px;width:20px;height:1px;background:#c6c6c6"></div>
<div class="t" style="left:-2px;width:19px;text-align:center;top:866px;font-size:13px;color:#262626">32</div>
<div style="position:absolute;left:0px;top:903px;width:20px;height:1px;background:#c6c6c6"></div>
<div class="t" style="left:-2px;width:19px;text-align:center;top:887px;font-size:13px;color:#262626">33</div>
<div style="position:absolute;left:0px;top:924px;width:20px;height:1px;background:#c6c6c6"></div>
<div class="t" style="left:-2px;width:19px;text-align:center;top:908px;font-size:13px;color:#262626">34</div>
<div style="position:absolute;left:0px;top:945px;width:20px;height:1px;background:#c6c6c6"></div>
<div class="t" style="left:-2px;width:19px;text-align:center;top:929px;font-size:13px;color:#262626">35</div>
<div style="position:absolute;left:0px;top:966px;width:20px;height:1px;background:#c6c6c6"></div>
<div class="t" style="left:-2px;width:19px;text-align:center;top:950px;font-size:13px;color:#262626">36</div>
<div style="position:absolute;left:0px;top:987px;width:20px;height:1px;background:#c6c6c6"></div>
<div class="t" style="left:-2px;width:19px;text-align:center;top:971px;font-size:13px;color:#262626">37</div>
<div style="position:absolute;left:84px;top:211px;width:1px;height:774px;background:#d9d9d9"></div>
<div style="position:absolute;left:106px;top:211px;width:1px;height:774px;background:#d9d9d9"></div>
<div style="position:absolute;left:160px;top:211px;width:1px;height:774px;background:#d9d9d9"></div>
<div style="position:absolute;left:617px;top:211px;width:1px;height:774px;background:#d9d9d9"></div>
<div style="position:absolute;left:681px;top:231px;width:1px;height:754px;background:#d9d9d9"></div>
<div style="position:absolute;left:745px;top:231px;width:1px;height:754px;background:#d9d9d9"></div>
<div style="position:absolute;left:809px;top:231px;width:1px;height:754px;background:#d9d9d9"></div>
<div style="position:absolute;left:873px;top:231px;width:1px;height:754px;background:#d9d9d9"></div>
<div style="position:absolute;left:937px;top:211px;width:1px;height:774px;background:#d9d9d9"></div>
<div style="position:absolute;left:1001px;top:211px;width:1px;height:774px;background:#d9d9d9"></div>
<div style="position:absolute;left:1071px;top:211px;width:1px;height:774px;background:#d9d9d9"></div>
<div style="position:absolute;left:1345px;top:211px;width:1px;height:774px;background:#d9d9d9"></div>
<div style="position:absolute;left:1409px;top:211px;width:1px;height:774px;background:#d9d9d9"></div>
<div style="position:absolute;left:1473px;top:211px;width:1px;height:774px;background:#d9d9d9"></div>
<div style="position:absolute;left:1537px;top:211px;width:1px;height:774px;background:#d9d9d9"></div>
<div style="position:absolute;left:1691px;top:211px;width:1px;height:125px;background:#d9d9d9"></div>
<div style="position:absolute;left:1691px;top:357px;width:1px;height:105px;background:#d9d9d9"></div>
<div style="position:absolute;left:1691px;top:504px;width:1px;height:126px;background:#d9d9d9"></div>
<div style="position:absolute;left:1691px;top:651px;width:1px;height:334px;background:#d9d9d9"></div>
<div style="position:absolute;left:1755px;top:211px;width:1px;height:125px;background:#d9d9d9"></div>
<div style="position:absolute;left:1755px;top:357px;width:1px;height:105px;background:#d9d9d9"></div>
<div style="position:absolute;left:1755px;top:483px;width:1px;height:502px;background:#d9d9d9"></div>
<div style="position:absolute;left:1819px;top:211px;width:1px;height:125px;background:#d9d9d9"></div>
<div style="position:absolute;left:1819px;top:357px;width:1px;height:105px;background:#d9d9d9"></div>
<div style="position:absolute;left:1819px;top:483px;width:1px;height:502px;background:#d9d9d9"></div>
<div style="position:absolute;left:1883px;top:211px;width:1px;height:125px;background:#d9d9d9"></div>
<div style="position:absolute;left:1883px;top:357px;width:1px;height:105px;background:#d9d9d9"></div>
<div style="position:absolute;left:1883px;top:483px;width:1px;height:502px;background:#d9d9d9"></div>
<div style="position:absolute;left:1893px;top:211px;width:1px;height:774px;background:#ababab"></div>
<div style="position:absolute;left:84px;top:231px;width:23px;height:22px;background:#ffff00"></div>
<div style="position:absolute;left:84px;top:252px;width:23px;height:22px;background:#ffff00"></div>
<div style="position:absolute;left:84px;top:462px;width:23px;height:22px;background:#ffff00"></div>
<div style="position:absolute;left:84px;top:609px;width:23px;height:22px;background:#ffff00"></div>
<div style="position:absolute;left:1071px;top:525px;width:275px;height:22px;background:#ffff00"></div>
<div style="position:absolute;left:1071px;top:672px;width:275px;height:22px;background:#ffff00"></div>
<div style="position:absolute;left:617px;top:210px;width:321px;height:22px;background:#ffff00;box-sizing:border-box;border:2px solid #000"></div>
<div class="c ce" style="left:20px;width:64px;top:210px;font-weight:bold;font-size:13.4px">Watched</div>
<div class="c ce" style="left:106px;width:54px;top:210px;">Video #</div>
<div class="c" style="left:163px;top:210px;">Description</div>
<div class="c ce" style="left:617px;width:321px;top:210px;font-weight:bold;font-size:12.85px">Videos marked with an astrisk (*) are priority!</div>
<div class="c ce" style="left:106px;width:54px;top:232px;">1</div>
<div class="c" style="left:163px;top:232px;">Start Here</div>
<div class="c r" style="left:617px;width:62px;top:232px;">2</div>
<div class="c r" style="left:681px;width:62px;top:232px;">46</div>
<div class="c ce" style="left:106px;width:54px;top:253px;">2</div>
<div class="c" style="left:163px;top:253px;">To Do List</div>
<div class="c r" style="left:617px;width:62px;top:253px;">9</div>
<div class="c r" style="left:681px;width:62px;top:253px;">42</div>
<div class="c ce" style="left:106px;width:54px;top:274px;">3</div>
<div class="c" style="left:163px;top:274px;">Budget Intro (1 of 2)</div>
<div class="c r" style="left:617px;width:62px;top:274px;">15</div>
<div class="c ce" style="left:106px;width:54px;top:295px;">4</div>
<div class="c" style="left:163px;top:295px;">Budget Intro (2 of 2)</div>
<div class="c r" style="left:617px;width:62px;top:295px;">12</div>
<div class="c r" style="left:681px;width:62px;top:295px;">49</div>
<div class="c ce" style="left:106px;width:54px;top:316px;">5</div>
<div class="c" style="left:163px;top:316px;">Requisitions - OT (1 of 2)</div>
<div class="c r" style="left:617px;width:62px;top:316px;">15</div>
<div class="c ce" style="left:106px;width:54px;top:337px;">6</div>
<div class="c" style="left:163px;top:337px;">Requisitions - OT (2 of 2)</div>
<div class="c r" style="left:617px;width:62px;top:337px;">2</div>
<div class="c r" style="left:681px;width:62px;top:337px;">32</div>
<div class="c ce" style="left:106px;width:54px;top:358px;">7</div>
<div class="c" style="left:163px;top:358px;">Requisitions - Low Incidence | Amazon</div>
<div class="c r" style="left:617px;width:62px;top:358px;">9</div>
<div class="c r" style="left:681px;width:62px;top:358px;">38</div>
<div class="c ce" style="left:106px;width:54px;top:379px;">8</div>
<div class="c" style="left:163px;top:379px;">Parent Reimbursement - Miscellaneous (1 of 4)</div>
<div class="c r" style="left:617px;width:62px;top:379px;">15</div>
<div class="c ce" style="left:106px;width:54px;top:400px;">9</div>
<div class="c" style="left:163px;top:400px;">Parent Reimbursement - Miscellaneous (2 of 4)</div>
<div class="c r" style="left:617px;width:62px;top:400px;">10</div>
<div class="c r" style="left:681px;width:62px;top:400px;">13</div>
<div class="c ce" style="left:106px;width:54px;top:421px;">10</div>
<div class="c" style="left:163px;top:421px;">Parent Reimbursement - Miscellaneous (3 of 4)</div>
<div class="c r" style="left:617px;width:62px;top:421px;">8</div>
<div class="c r" style="left:681px;width:62px;top:421px;">57</div>
<div class="c ce" style="left:106px;width:54px;top:442px;">11</div>
<div class="c" style="left:163px;top:442px;">Email - Amazon Orders (follow-up #7 | Low Incidence)</div>
<div class="c r" style="left:617px;width:62px;top:442px;">2</div>
<div class="c r" style="left:681px;width:62px;top:442px;">48</div>
<div class="c ce" style="left:106px;width:54px;top:463px;">12</div>
<div class="c" style="left:163px;top:463px;">Intro to Emails (1 of 3)</div>
<div class="c r" style="left:617px;width:62px;top:463px;">15</div>
<div class="c ce" style="left:106px;width:54px;top:484px;">13</div>
<div class="c" style="left:163px;top:484px;">Intro to Emails (2 of 3)</div>
<div class="c r" style="left:617px;width:62px;top:484px;">15</div>
<div class="c ce" style="left:106px;width:54px;top:505px;">14</div>
<div class="c" style="left:163px;top:505px;">Intro to Emails (3 of 3)</div>
<div class="c r" style="left:617px;width:62px;top:505px;">14</div>
<div class="c r" style="left:681px;width:62px;top:505px;">56</div>
<div class="c ce" style="left:106px;width:54px;top:526px;">15</div>
<div class="c" style="left:163px;top:526px;">Invoices - CSSD (1 of 2)</div>
<div class="c r" style="left:617px;width:62px;top:526px;">14</div>
<div class="c r" style="left:681px;width:62px;top:526px;">30</div>
<div class="c ce" style="left:106px;width:54px;top:547px;">16</div>
<div class="c" style="left:163px;top:547px;">Invoices - CSSD (1 of 2)</div>
<div class="c r" style="left:617px;width:62px;top:547px;">8</div>
<div class="c r" style="left:681px;width:62px;top:547px;">24</div>
<div class="c ce" style="left:106px;width:54px;top:568px;">17</div>
<div class="c" style="left:163px;top:568px;">Requisitions - Stamps |Low Incidence| Staples (1 of 2)</div>
<div class="c r" style="left:617px;width:62px;top:568px;">7</div>
<div class="c r" style="left:681px;width:62px;top:568px;">56</div>
<div class="c ce" style="left:106px;width:54px;top:589px;">18</div>
<div class="c" style="left:163px;top:589px;">Requisitions - Assessment Kit Components</div>
<div class="c r" style="left:617px;width:62px;top:589px;">11</div>
<div class="c r" style="left:681px;width:62px;top:589px;">57</div>
<div class="c ce" style="left:106px;width:54px;top:610px;">19</div>
<div class="c" style="left:163px;top:610px;">Open PO Orders</div>
<div class="c r" style="left:617px;width:62px;top:610px;">6</div>
<div class="c r" style="left:681px;width:62px;top:610px;">1</div>
<div class="c ce" style="left:106px;width:54px;top:631px;">20</div>
<div class="c" style="left:163px;top:631px;">Receiving of Open Order |Amazon</div>
<div class="c r" style="left:617px;width:62px;top:631px;">2</div>
<div class="c r" style="left:681px;width:62px;top:631px;">48</div>
<div class="c ce" style="left:106px;width:54px;top:652px;">21</div>
<div class="c" style="left:163px;top:652px;">Open PO - Staples Order</div>
<div class="c r" style="left:617px;width:62px;top:652px;">3</div>
<div class="c r" style="left:681px;width:62px;top:652px;">33</div>
<div class="c ce" style="left:106px;width:54px;top:673px;">22</div>
<div class="c" style="left:163px;top:673px;">Receiving Delivered to Another Site (1 of 2)</div>
<div class="c r" style="left:617px;width:62px;top:673px;">6</div>
<div class="c r" style="left:681px;width:62px;top:673px;">34</div>
<div class="c ce" style="left:106px;width:54px;top:694px;">23</div>
<div class="c" style="left:163px;top:694px;">Receiving Delivered to Another Site (2 of 2)</div>
<div class="c r" style="left:617px;width:62px;top:694px;">4</div>
<div class="c r" style="left:681px;width:62px;top:694px;">45</div>
<div class="c ce" style="left:106px;width:54px;top:715px;">24</div>
<div class="c" style="left:163px;top:715px;">Email - PO's &amp; Requisitions (1 of 3)</div>
<div class="c r" style="left:617px;width:62px;top:715px;">2</div>
<div class="c r" style="left:681px;width:62px;top:715px;">5</div>
<div class="c ce" style="left:106px;width:54px;top:736px;">25</div>
<div class="c" style="left:163px;top:736px;">Email - PO's &amp; Requisitions (2 of 3)</div>
<div class="c r" style="left:617px;width:62px;top:736px;">15</div>
<div class="c ce" style="left:106px;width:54px;top:757px;">26</div>
<div class="c" style="left:163px;top:757px;">Email - PO's &amp; Requisitions (3 of 3)</div>
<div class="c r" style="left:617px;width:62px;top:757px;">13</div>
<div class="c r" style="left:681px;width:62px;top:757px;">45</div>
<div class="c ce" style="left:106px;width:54px;top:778px;">27</div>
<div class="c" style="left:163px;top:778px;">Receiving - No Packing Slip</div>
<div class="c r" style="left:617px;width:62px;top:778px;">5</div>
<div class="c r" style="left:681px;width:62px;top:778px;">42</div>
<div class="c ce" style="left:106px;width:54px;top:799px;">28</div>
<div class="c" style="left:163px;top:799px;">Emails - Random (NCA Placement)</div>
<div class="c r" style="left:617px;width:62px;top:799px;">4</div>
<div class="c r" style="left:681px;width:62px;top:799px;">16</div>
<div class="c ce" style="left:106px;width:54px;top:820px;">29</div>
<div class="c" style="left:163px;top:820px;">Receiving of Open Order | Staples</div>
<div class="c r" style="left:617px;width:62px;top:820px;">2</div>
<div class="c r" style="left:681px;width:62px;top:820px;">10</div>
<div class="c ce" style="left:106px;width:54px;top:841px;">30</div>
<div class="c" style="left:163px;top:841px;">Requisitions - Online Assessment PASSWORDS</div>
<div class="c r" style="left:617px;width:62px;top:841px;">3</div>
<div class="c r" style="left:681px;width:62px;top:841px;">58</div>
<div class="c ce" style="left:106px;width:54px;top:862px;">31</div>
<div class="c" style="left:163px;top:862px;">Email - SEMS Requests (1 of 2)</div>
<div class="c r" style="left:617px;width:62px;top:862px;">6</div>
<div class="c r" style="left:681px;width:62px;top:862px;">17</div>
<div class="c ce" style="left:106px;width:54px;top:883px;">32</div>
<div class="c" style="left:163px;top:883px;">Payroll | In Box | Payroll Log | Entering EWA's</div>
<div class="c r" style="left:617px;width:62px;top:883px;">14</div>
<div class="c r" style="left:681px;width:62px;top:883px;">51</div>
<div class="c ce" style="left:106px;width:54px;top:904px;">33</div>
<div class="c" style="left:163px;top:904px;">MOUs for NCA (1 of 3)</div>
<div class="c r" style="left:617px;width:62px;top:904px;">15</div>
<div class="c r" style="left:681px;width:62px;top:904px;">0</div>
<div class="c ce" style="left:106px;width:54px;top:925px;">34</div>
<div class="c" style="left:163px;top:925px;">Payroll - Psych MOUs (1 of 2)</div>
<div class="c r" style="left:617px;width:62px;top:925px;">15</div>
<div class="c r" style="left:681px;width:62px;top:925px;">0</div>
<div class="c ce" style="left:106px;width:54px;top:946px;">35</div>
<div class="c" style="left:163px;top:946px;">Payroll - Psych MOUs (2 of 2)</div>
<div class="c r" style="left:617px;width:62px;top:946px;">6</div>
<div class="c r" style="left:681px;width:62px;top:946px;">44</div>
<div class="c ce" style="left:106px;width:54px;top:967px;">36</div>
<div class="c" style="left:163px;top:967px;">MOUs for NCA (2 of 3)</div>
<div class="c r" style="left:617px;width:62px;top:967px;">15</div>
<div class="c r" style="left:681px;width:62px;top:967px;">0</div>
<div class="t" style="left:84px;width:23px;text-align:center;top:236px;font-size:17px;line-height:16px;color:#000">*</div>
<div class="t" style="left:84px;width:23px;text-align:center;top:257px;font-size:17px;line-height:16px;color:#000">*</div>
<div class="t" style="left:84px;width:23px;text-align:center;top:467px;font-size:17px;line-height:16px;color:#000">*</div>
<div class="t" style="left:84px;width:23px;text-align:center;top:614px;font-size:17px;line-height:16px;color:#000">*</div>
<div class="c" style="left:1004px;top:210px;">User ID:</div>
<div class="c" style="left:1004px;top:232px;">Password:</div>
<div class="c" style="left:1004px;top:274px;">Web-site:</div>
<div class="c" style="left:1074px;top:210px;color:#0563c1;text-decoration:underline">thea.welch@sduhsd.net</div>
<div class="c" style="left:1074px;top:232px;">SPEDisGREAT</div>
<div class="c" style="left:1074px;top:274px;">screencast-o-matic.com</div>
<div class="c" style="left:1074px;top:316px;font-weight:bold;font-size:12.6px">Emails Covered</div>
<div class="c" style="left:1083px;top:337px;">Coding System</div>
<div class="c" style="left:1083px;top:358px;">Email Files</div>
<div class="c" style="left:1083px;top:379px;">Checks</div>
<div class="c" style="left:1083px;top:400px;">Invoices</div>
<div class="c" style="left:1083px;top:421px;">REQs &amp; Pos</div>
<div class="c" style="left:1083px;top:442px;">Random (NCA Placement)</div>
<div class="c" style="left:1083px;top:463px;">SEMS Requests</div>
<div class="c" style="left:1083px;top:484px;">Legal Invoices</div>
<div class="c" style="left:1083px;top:505px;">NPS/NPA Discontinued Services</div>
<div class="c" style="left:1083px;top:526px;">New Services (NPA)</div>
<div class="c" style="left:1074px;top:568px;font-weight:bold;font-size:12.6px">In Box Covered</div>
<div class="c" style="left:1092px;top:589px;">Payroll Logs</div>
<div class="c" style="left:1092px;top:610px;">Receiving</div>
<div class="c" style="left:1092px;top:631px;">Records Request Invoices</div>
<div class="c" style="left:1092px;top:652px;">Mileage</div>
<div class="c" style="left:1092px;top:673px;">RCF</div>
<div class="c" style="left:1092px;top:694px;">POs</div>
<div class="c" style="left:1092px;top:715px;">NCTD Invoices</div>
<div class="c" style="left:1074px;top:778px;font-weight:bold;font-size:12.6px">Payroll Covered</div>
<div class="c" style="left:1092px;top:799px;">Payroll Logs</div>
<div class="c" style="left:1092px;top:820px;">EWA's - Entering</div>
<div class="c" style="left:1092px;top:841px;">Psych MOU</div>
<div class="c" style="left:1092px;top:862px;">EWA's - Posting</div>
<div class="c" style="left:1092px;top:883px;">SEMS Report</div>
<div class="c" style="left:1092px;top:904px;">Auditing Payroll</div>
<div class="c" style="left:1074px;top:967px;font-weight:bold;font-size:12.6px">Master Spreadsheets</div>
<div style="position:absolute;left:1537px;top:211px;width:356px;height:774px;overflow:hidden">
<div class="c" style="left:3px;top:-1px;text-decoration:line-through">Email</div>
<div class="c" style="left:3px;top:21px;text-decoration:line-through">Invoices</div>
<div class="c" style="left:3px;top:42px;text-decoration:line-through">In Box</div>
<div class="c" style="left:3px;top:63px;text-decoration:line-through">Receiving</div>
<div class="c" style="left:3px;top:84px;text-decoration:line-through">Contracts - MOU</div>
<div class="c" style="left:3px;top:105px;text-decoration:line-through">Budget Adjustments</div>
<div class="c" style="left:3px;top:126px;text-decoration:line-through">Master Spreadsheets (req, Open, Obj, Quick, Master Con...)</div>
<div class="c" style="left:3px;top:147px;text-decoration:line-through">2012 &amp; Up OPEN PO List</div>
<div class="c" style="left:3px;top:168px;text-decoration:line-through">Worksheets for Objects</div>
<div class="c" style="left:3px;top:189px;text-decoration:line-through">Requisition Log</div>
<div class="c" style="left:3px;top:210px;text-decoration:line-through">Employee List</div>
<div class="c" style="left:3px;top:231px;text-decoration:line-through">Parent Settlements</div>
<div class="c" style="left:3px;top:252px;text-decoration:line-through">Xerox - Ordering Supplies, Where they are kept, How to change toner</div>
<div class="c" style="left:3px;top:273px;text-decoration:line-through">Xerox - Troubleshooting Xerox</div>
<div class="c" style="left:3px;top:294px;text-decoration:line-through">Board Agenda</div>
<div class="c" style="left:3px;top:315px;text-decoration:line-through">SPED Overview</div>
<div class="c" style="left:3px;top:336px;text-decoration:line-through">Parent - Home Visits</div>
<div class="c" style="left:3px;top:357px;text-decoration:line-through">Parent - Mileage</div>
<div class="c" style="left:3px;top:378px;text-decoration:line-through">Inventory</div>
<div class="c" style="left:3px;top:399px;text-decoration:line-through">Accruals</div>
<div class="c" style="left:3px;top:420px;text-decoration:line-through">New Program Supervisor Meeting</div>
<div class="c" style="left:3px;top:441px;text-decoration:line-through">Computer Inventory</div>
<div class="c" style="left:3px;top:525px">Budget</div>
<div class="c" style="left:3px;top:546px">Voicemail</div>
<div class="c" style="left:3px;top:567px">Miscellaneous File</div>
<div class="c" style="left:3px;top:588px">Contracts - NPA</div>
<div class="c" style="left:3px;top:609px">Contracts - NPS</div>
<div class="c" style="left:3px;top:630px">Contracts - MOU</div>
<div class="c" style="left:3px;top:651px">Google Drive</div>
<div class="c" style="left:3px;top:672px">Contracts - Other</div>
<div class="c" style="left:3px;top:693px">NCTD - Invoices</div>
<div class="c" style="left:3px;top:714px">Pending</div>
<div class="c" style="left:3px;top:735px">P-Card</div>
</div>
<div style="position:absolute;left:1894px;top:192px;width:16px;height:793px;background:#e6e6e6"></div>
<div style="position:absolute;left:1897px;top:192px;width:13px;height:793px;background:#dedede;box-sizing:border-box;border-left:1px solid #c6c6c6"></div>
<div style="position:absolute;left:1898px;top:193px;width:12px;height:16px;background:#fff"></div>
<svg style="left:1900px;top:198px" width="9" height="5"><path d="M0 5L4.5 0 9 5z" fill="#606060"/></svg>
<div style="position:absolute;left:1898px;top:209px;width:12px;height:145px;background:#fff;box-sizing:border-box;border-top:1px solid #c6c6c6;border-bottom:1px solid #c6c6c6"></div>
<div style="position:absolute;left:1898px;top:968px;width:12px;height:16px;background:#fff"></div>
<svg style="left:1900px;top:974px" width="9" height="5"><path d="M0 0L4.5 5 9 0z" fill="#606060"/></svg>
<div style="position:absolute;left:0px;top:985px;width:1910px;height:29px;background:#e6e6e6"></div>
<div style="position:absolute;left:0px;top:985px;width:1910px;height:1px;background:#c6c6c6"></div>
<svg style="left:20px;top:994px" width="6" height="9"><path d="M5 0v9L0 4.5z" fill="#c0c0c0"/></svg>
<svg style="left:49px;top:994px" width="6" height="9"><path d="M0 0v9L5 4.5z" fill="#c0c0c0"/></svg>
<div style="position:absolute;left:95px;top:985px;width:65px;height:25px;background:#fff;box-sizing:border-box;border-left:1px solid #c6c6c6;border-right:1px solid #c6c6c6"></div>
<div style="position:absolute;left:95px;top:1008px;width:65px;height:2px;background:#217346"></div>
<div class="t" style="left:107px;top:991px;font-size:13px;font-weight:bold;color:#217346">Sheet1</div>
<svg style="left:192px;top:990px" width="17" height="17"><circle cx="8.5" cy="8.5" r="7.5" fill="none" stroke="#7a7a7a" stroke-width="1.3"/><path d="M8.5 4.5v8M4.5 8.5h8" stroke="#7a7a7a" stroke-width="1.5"/></svg>
<div style="position:absolute;left:1147px;top:992px;width:2px;height:2px;background:#9b9b9b"></div>
<div style="position:absolute;left:1147px;top:997px;width:2px;height:2px;background:#9b9b9b"></div>
<div style="position:absolute;left:1147px;top:1002px;width:2px;height:2px;background:#9b9b9b"></div>
<div style="position:absolute;left:1163px;top:991px;width:1430px;height:17px;background:#fff;box-sizing:border-box;border:1px solid #c6c6c6"></div>
<div style="position:absolute;left:1164px;top:992px;width:15px;height:15px;background:#fff;box-sizing:border-box;border-right:1px solid #c6c6c6"></div>
<svg style="left:1168px;top:995px" width="5" height="9"><path d="M5 0v9L0 4.5z" fill="#606060"/></svg>
<div style="position:absolute;left:0px;top:1014px;width:1910px;height:16px;background:#f1f1f1"></div>
<div style="position:absolute;left:0px;top:1014px;width:1910px;height:1px;background:#d5d5d5"></div>
<div class="t" style="left:3px;top:1019px;font-size:11px;color:#444">Ready</div>
<svg style="left:53px;top:1016px" width="14" height="14"><rect x="2" y="4" width="11" height="10" fill="none" stroke="#777"/><path d="M2 7h11M2 10h11M6 4v10M9 4v10" stroke="#777"/><circle cx="3" cy="3" r="2.5" fill="#777"/></svg>
<div style="position:absolute;left:1623px;top:1015px;width:37px;height:15px;background:#dcdcdc"></div>
<svg style="left:1634px;top:1018px" width="15" height="12"><rect x="0.5" y="0.5" width="14" height="11" fill="none" stroke="#666"/><path d="M0.5 4.5h14M0.5 8h14M5 0.5v11M10 0.5v11" stroke="#666"/></svg>
<svg style="left:1674px;top:1018px" width="13" height="12"><rect x="0.5" y="0.5" width="12" height="11" fill="none" stroke="#666"/><path d="M3 3.5h7M3 6h7M3 8.5h7" stroke="#666"/></svg>
<svg style="left:1710px;top:1018px" width="13" height="12"><rect x="0.5" y="0.5" width="12" height="11" fill="none" stroke="#666"/><path d="M6.5 0.5v5h6" fill="none" stroke="#666"/></svg>
<div style="position:absolute;left:1741px;top:1022px;width:8px;height:2px;background:#666"></div>
<div style="position:absolute;left:1752px;top:1022px;width:105px;height:1px;background:#999"></div>
<div style="position:absolute;left:1801px;top:1017px;width:3px;height:12px;background:#666"></div>
<svg style="left:1855px;top:1017px" width="10" height="10"><path d="M5 0v10M0 5h10" stroke="#666" stroke-width="2"/></svg>
<div class="t" style="left:1876px;top:1017px;font-size:12px;color:#444">100%</div>
<div style="position:absolute;left:1582px;top:842px;width:320px;height:179px;background:rgba(0,0,0,0.35);filter:blur(1.5px)"></div>
<svg style="left:1580px;top:840px" width="320" height="179" viewBox="0 0 320 179">
<defs><filter id="bl" x="-5%" y="-5%" width="110%" height="110%"><feGaussianBlur stdDeviation="1.6"/></filter>
<pattern id="flr" width="6" height="6" patternUnits="userSpaceOnUse"><rect width="6" height="6" fill="#2d2a2b"/><circle cx="2" cy="2" r="1.2" fill="#8a7a70"/><circle cx="5" cy="4.5" r="0.9" fill="#6d5f63"/></pattern>
<linearGradient id="ctr" x1="0" y1="0" x2="0" y2="1"><stop offset="0" stop-color="#aebcbc"/><stop offset="1" stop-color="#7f918d"/></linearGradient><linearGradient id="bpan" x1="0" y1="0" x2="0" y2="1"><stop offset="0" stop-color="#3f6e96"/><stop offset="1" stop-color="#2b5573"/></linearGradient>
<clipPath id="wc"><rect width="320" height="179"/></clipPath></defs>
<g clip-path="url(#wc)">
<rect width="320" height="179" fill="#b9bdb8"/>
<g filter="url(#bl)">
<!-- left wall / cabinet -->
<rect x="0" y="0" width="52" height="118" fill="#3f6f96"/>
<rect x="0" y="0" width="14" height="48" fill="#c9d8dc"/>
<rect x="33" y="40" width="2" height="55" fill="#2a3a48"/>
<rect x="36" y="95" width="7" height="8" fill="#d8dde0"/>
<rect x="0" y="112" width="53" height="67" fill="url(#ctr)"/>
<rect x="46" y="112" width="4" height="67" fill="#c9d3d0"/>
<!-- door frame -->
<rect x="47" y="0" width="72" height="179" fill="#c9d0cc"/>
<rect x="53" y="5" width="60" height="56" fill="#cfcfc0"/>
<rect x="53" y="5" width="60" height="12" fill="#c7c6b3"/>
<rect x="60" y="58" width="54" height="27" fill="#5f8fbf"/>
<rect x="57" y="83" width="57" height="24" fill="#dedcd4"/>
<rect x="57" y="84" width="22" height="6" fill="#c9b99a"/>
<rect x="80" y="85" width="22" height="20" fill="#f0f0ee"/>
<rect x="58" y="104" width="56" height="5" fill="#bfc5c5"/>
<rect x="57" y="109" width="57" height="70" fill="url(#bpan)"/>
<rect x="114" y="0" width="4" height="179" fill="#e9ecea"/>
<!-- wall right of door -->
<rect x="118" y="0" width="16" height="120" fill="#c9c1ab"/>
<rect x="118" y="45" width="16" height="40" fill="#e1e3e0"/>
<!-- windows -->
<rect x="132" y="0" width="188" height="82" fill="#e3eaec"/>
<rect x="140" y="0" width="40" height="80" fill="#d5dee2"/>
<rect x="132" y="0" width="188" height="4" fill="#a9b2b4"/>
<path d="M132 40 L320 8 L320 13 L132 45z" fill="#8e9799"/>
<path d="M132 22 L200 15 L200 18 L132 25z" fill="#a0a8aa"/>
<rect x="142" y="0" width="2" height="80" fill="#9ea6a8"/>
<rect x="152" y="0" width="2" height="80" fill="#9ea6a8"/>
<rect x="163" y="0" width="2" height="80" fill="#9ea6a8"/>
<rect x="132" y="17" width="44" height="2" fill="#a4acae"/>
<rect x="132" y="33" width="44" height="2" fill="#a4acae"/>
<rect x="132" y="50" width="44" height="2" fill="#a4acae"/>
<rect x="176" y="0" width="6" height="45" fill="#c4b9a5"/>
<rect x="213" y="0" width="4" height="80" fill="#7d8789"/>
<rect x="266" y="0" width="3" height="80" fill="#6f797b"/>
<rect x="271" y="0" width="3" height="80" fill="#7d8789"/>
<rect x="218" y="56" width="45" height="20" fill="#c6d6de"/>
<ellipse cx="296" cy="62" rx="24" ry="18" fill="#aec08c"/>
<!-- counter -->
<rect x="132" y="78" width="188" height="22" fill="#d1ccc2"/>
<path d="M185 98 L320 92 L320 108 L200 104z" fill="#b8b9b2"/>
<rect x="200" y="102" width="120" height="77" fill="#aab3aa"/>
<rect x="240" y="103" width="2" height="76" fill="#9aa19a"/>
<rect x="256" y="79" width="27" height="26" fill="#c42a3d"/>
<rect x="284" y="82" width="24" height="18" fill="#e6e4dc"/>
<rect x="303" y="96" width="17" height="22" fill="#a38d44"/>
<rect x="135" y="78" width="25" height="20" fill="#e6ecea"/>
<rect x="137" y="82" width="18" height="6" fill="#7fae8c"/>
<!-- woman -->
<g transform="translate(6,0)">
<path d="M148 95 C144 60 152 42 176 41 C199 41 210 56 210 85 C211 110 212 130 222 150 L205 160 L150 150z" fill="#3b2e28"/>
<ellipse cx="173" cy="90" rx="22" ry="31" fill="#c9a090"/>
<path d="M151 78 C156 60 170 52 190 56 C200 60 205 70 206 82 C200 66 185 60 170 62 C160 64 154 70 151 78z" fill="#3b2e28"/>
<rect x="163" y="114" width="20" height="14" fill="#b08574"/>
<path d="M98 179 C104 150 122 130 150 123 C162 132 186 132 200 124 C228 130 245 150 252 179z" fill="url(#flr)"/>
<path d="M80 179 C90 165 100 157 112 158 L108 179z" fill="#a8764f"/>
</g>
</g>
<rect x="0.5" y="0.5" width="319" height="178" fill="none" stroke="#6f6f6f" stroke-opacity="0.6"/>
</g>
</svg>
</body></html>
